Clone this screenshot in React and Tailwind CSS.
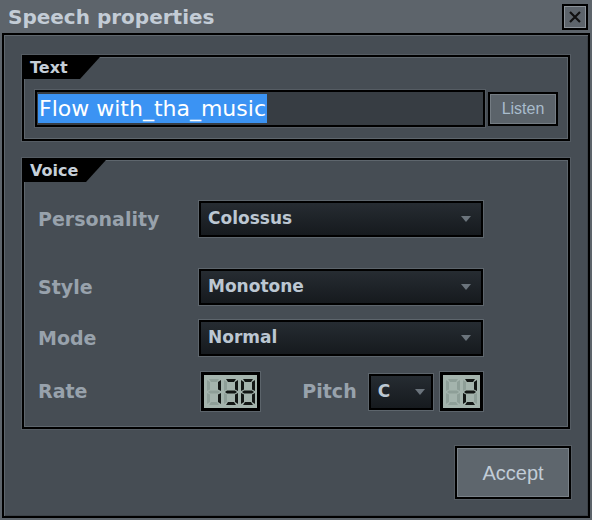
import React from 'react'

const SEGS = {
  a: 'M2 0h10l-2 3H4z',
  b: 'M14 1v11l-3-1.5V3z',
  c: 'M14 14v11l-3-2V15.5z',
  d: 'M2 26h10l-2-3H4z',
  e: 'M0 14v11l3-2V15.5z',
  f: 'M0 1v11l3-1.5V3z',
  g: 'M1 13l2-1.5h8l2 1.5-2 1.5H3z',
}

const DIGITS = {
  ' ': '',
  1: 'bc',
  2: 'abged',
  3: 'abcdg',
  8: 'abcdefg',
}

const Digit = ({ d }) => {
  const on = DIGITS[d] || ''
  return (
    <svg width="14" height="26" viewBox="0 0 14 26">
      {Object.keys(SEGS).map((k) => (
        <path key={k} d={SEGS[k]} fill={on.includes(k) ? '#121614' : '#8e9f98'} />
      ))}
    </svg>
  )
}

const Lcd = ({ value, className }) => (
  <div className={`flex h-[39px] items-center justify-center gap-[3px] border-[3px] border-black bg-[#a4b4ad] shadow-[0_0_0_1px_#5c646b] ${className}`}>
    {value.split('').map((d, i) => (
      <Digit key={i} d={d} />
    ))}
  </div>
)

const Arrow = () => (
  <svg width="10" height="6" viewBox="0 0 10 6">
    <path d="M0 0h10L5 6z" fill="#6b747c" />
  </svg>
)

const Select = ({ value, className }) => (
  <div className={`flex h-[36px] items-center justify-between border-2 border-black bg-gradient-to-b from-[#262c32] to-[#161a1e] pl-[7px] pr-[10px] shadow-[0_0_0_1px_#5d656c] ${className}`}>
    <span className="text-[17px] font-bold text-[#bcc7d2]">{value}</span>
    <Arrow />
  </div>
)

const Group = ({ title, tabW, className, children }) => (
  <div className={`border-2 border-black bg-[#464d54] shadow-[inset_0_0_0_1px_#5e666d,0_0_0_1px_#555c63] ${className}`}>
    <div
      className="flex h-[22px] items-center bg-black pl-[6px] text-[16px] font-bold text-[#c6cfd8] [clip-path:polygon(0_0,100%_0,calc(100%-20px)_100%,0_100%)]"
      style={{ width: tabW }}
    >
      {title}
    </div>
    {children}
  </div>
)

const Label = ({ children, className }) => (
  <span className={`text-[19px] font-bold text-[#98a2ac] ${className}`}>{children}</span>
)

export default function App() {
  return (
    <div className="flex h-[520px] w-[592px] flex-col bg-[#5d646b] font-['DejaVu_Sans',sans-serif]">
      <div className="flex h-[33px] items-center justify-between pl-[8px] pr-[4px]">
        <span className="text-[20px] font-bold text-[#c3ccd6]">Speech properties</span>
        <div className="flex h-[26px] w-[26px] items-center justify-center border-2 border-black bg-[#5d646b] shadow-[inset_0_0_0_1px_#8a9198]">
          <svg width="12" height="12" viewBox="0 0 12 12">
            <path d="M1 1l10 10M11 1L1 11" stroke="#111" strokeWidth="2.2" />
          </svg>
        </div>
      </div>
      <div className="mx-[2px] mb-[2px] flex flex-1 flex-col border-2 border-black bg-[#464d54] px-[18px] pt-[20px] shadow-[inset_1px_1px_0_0_#5f676e,inset_-1px_-1px_0_0_#3c4248]">
        <Group title="Text" tabW={76} className="h-[86px]">
          <div className="mt-[11px] flex items-center gap-[3px] pl-[11px] pr-[10px]">
            <div className="flex h-[37px] flex-1 items-center border-2 border-black bg-[#373d43] pl-[1px] shadow-[0_0_0_1px_#555c63]">
              <span className="bg-[#3b93f3] px-[1px] text-[22px] leading-[29px] text-white">Flow with_tha_music</span>
            </div>
            <div className="flex h-[34px] w-[70px] items-center justify-center border-2 border-black bg-[#5b636a] shadow-[inset_0_0_0_1px_#747c83]">
              <span className="font-['Liberation_Sans',sans-serif] text-[16px] text-[#a9bccc]">Listen</span>
            </div>
          </div>
        </Group>
        <Group title="Voice" tabW={82} className="mt-[17px] h-[271px]">
          <div className="flex flex-col pl-[14px] pr-[85px] pt-[19px]">
            <div className="flex items-center justify-between">
              <Label>Personality</Label>
              <Select value="Colossus" className="w-[284px]" />
            </div>
            <div className="mt-[32px] flex items-center justify-between">
              <Label>Style</Label>
              <Select value="Monotone" className="w-[284px]" />
            </div>
            <div className="mt-[15px] flex items-center justify-between">
              <Label>Mode</Label>
              <Select value="Normal" className="w-[284px]" />
            </div>
            <div className="mt-[16px] flex items-center">
              <Label className="w-[164px]">Rate</Label>
              <Lcd value="138" className="w-[60px]" />
              <Label className="ml-[42px]">Pitch</Label>
              <Select value="C" className="ml-[12px] w-[65px] !pr-[6px]" />
              <Lcd value=" 2" className="ml-[7px] w-[43px]" />
            </div>
          </div>
        </Group>
        <div className="mt-[17px] flex justify-end">
          <div className="mr-[-1px] flex h-[53px] w-[116px] items-center justify-center border-2 border-black bg-[#5e666d] shadow-[inset_0_0_0_1px_#7a8289,0_0_0_1px_#555c63]">
            <span className="font-['Liberation_Sans',sans-serif] text-[20px] text-[#c1ccd7]">Accept</span>
          </div>
        </div>
      </div>
    </div>
  )
}
